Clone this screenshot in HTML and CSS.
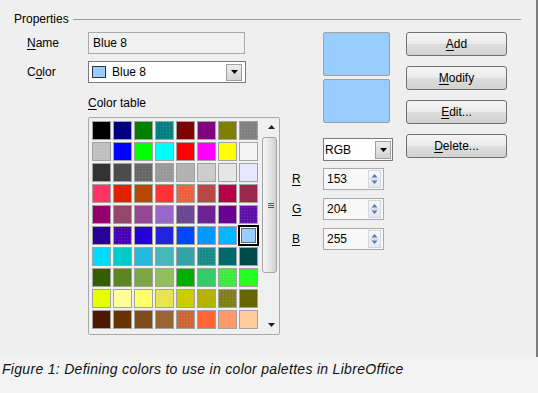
FILE: index.html
```html
<!DOCTYPE html>
<html lang="en">
<head>
    <meta charset="UTF-8">
    <title>Colors</title>
    <link rel="stylesheet" href="styles.css">
</head>
<body>
    <div class="dialog">
        <div class="legend"><span>Properties</span><div class="rule"></div></div>
        <div class="content">
            <div class="left">
                <div class="row">
                    <label><u>N</u>ame</label>
                    <div class="field name-field">Blue 8</div>
                </div>
                <div class="row">
                    <label>C<u>o</u>lor</label>
                    <div class="combo color-combo">
                        <span class="swatch"></span>
                        <span>Blue 8</span>
                        <span class="drop"><svg width="7" height="4" viewBox="0 0 7 4"><path d="M0 0h7L3.5 4z" fill="#000"/></svg></span>
                    </div>
                </div>
                <div class="table-label"><u>C</u>olor table</div>
                <div class="table-frame">
                    <div class="cells" id="cells"></div>
                    <div class="scrollbar">
                        <div class="arrow"><svg width="7" height="4" viewBox="0 0 7 4"><path d="M3.5 0L7 4H0z" fill="#222"/></svg></div>
                        <div class="thumb"><span class="grip"></span></div>
                        <div class="arrow down"><svg width="7" height="4" viewBox="0 0 7 4"><path d="M0 0h7L3.5 4z" fill="#222"/></svg></div>
                    </div>
                </div>
            </div>
            <div class="middle">
                <div class="preview"></div>
                <div class="preview"></div>
                <div class="combo rgb-combo">
                    <span>RGB</span>
                    <span class="drop"><svg width="7" height="4" viewBox="0 0 7 4"><path d="M0 0h7L3.5 4z" fill="#000"/></svg></span>
                </div>
                <div class="spin-row">
                    <label><u>R</u></label>
                    <div class="spin"><span>153</span><span class="spin-btns"><svg width="11" height="16" viewBox="0 0 11 16"><path d="M5.5 3L8.5 6.5H2.5z M2.5 9.5h6L5.5 13z" fill="#5a78b8"/><path d="M1 8h9" stroke="#c8cfdc"/></svg></span></div>
                </div>
                <div class="spin-row">
                    <label><u>G</u></label>
                    <div class="spin"><span>204</span><span class="spin-btns"><svg width="11" height="16" viewBox="0 0 11 16"><path d="M5.5 3L8.5 6.5H2.5z M2.5 9.5h6L5.5 13z" fill="#5a78b8"/><path d="M1 8h9" stroke="#c8cfdc"/></svg></span></div>
                </div>
                <div class="spin-row">
                    <label><u>B</u></label>
                    <div class="spin"><span>255</span><span class="spin-btns"><svg width="11" height="16" viewBox="0 0 11 16"><path d="M5.5 3L8.5 6.5H2.5z M2.5 9.5h6L5.5 13z" fill="#5a78b8"/><path d="M1 8h9" stroke="#c8cfdc"/></svg></span></div>
                </div>
            </div>
            <div class="buttons">
                <button><u>A</u>dd</button>
                <button><u>M</u>odify</button>
                <button><u>E</u>dit...</button>
                <button><u>D</u>elete...</button>
            </div>
        </div>
    </div>
    <p class="caption">Figure 1: Defining colors to use in color palettes in LibreOffice</p>
    <script>
        // standard palette, * = drawn dithered
        var palette = [
            '#000000', '#000080', '#008000', '*#008080', '#800000', '#800080', '#808000', '*#808080',
            '*#c0c0c0', '#0000ff', '#00ff00', '#00ffff', '#ff0000', '#ff00ff', '#ffff00', '#f4f4f4',
            '#333333', '#4c4c4c', '*#666666', '*#999999', '#b3b3b3', '*#cccccc', '*#e6e6e6', '#e6e6ff',
            '#ff3366', '#dc2300', '#b84700', '#ff3333', '*#eb613d', '#b84747', '#b80047', '#99284c',
            '#94006b', '#94476b', '#944794', '#9966cc', '#6b4794', '#6b2394', '#6b0094', '*#5e11a6',
            '#280099', '*#4700b8', '#2300dc', '#2323dc', '#0047ff', '#0099ff', '#00b8ff', '#99ccff',
            '#00dcff', '#00cccc', '#23b8dc', '#47b8b8', '#33a3a3', '*#198a8a', '#006b6b', '#004a4a',
            '#355e00', '#5c8526', '#7da647', '#94bd5e', '#00ae00', '#33cc66', '*#3deb3d', '#23ff23',
            '*#e6ff00', '#ffff99', '#ffff66', '#e6e64c', '#cccc00', '#b3b300', '*#808019', '#666600',
            '#4c1900', '#663300', '#804c19', '#996633', '*#cc6633', '#ff6633', '#ff9966', '#ffcc99'
        ];
        var cells = document.getElementById('cells');
        palette.forEach(function (c, i) {
            var cell = document.createElement('div');
            cell.className = 'cell';
            if (c.charAt(0) === '*') {
                c = c.slice(1);
                cell.className += ' dith';
            }
            if (i === 47) cell.className += ' selected';
            cell.style.backgroundColor = c;
            cells.appendChild(cell);
        });
    </script>
</body>
</html>
```

FILE: styles.css
```css
body {
    margin: 0;
    background: #f3f3f3;
    font-family: "Liberation Sans", Arial, sans-serif;
    font-size: 12px;
    line-height: 14px;
    color: #000;
}
u {
    text-decoration-thickness: 1px;
    text-underline-offset: 2px;
}
.dialog {
    height: 357px;
    box-sizing: border-box;
    background: #efefef;
    border-right: 2px solid #7d7d7d;
}
.legend {
    display: flex;
    align-items: center;
    gap: 4px;
    padding: 12px 15px 0 14px;
}
.legend .rule {
    flex: 1;
    height: 1px;
    background: #a0a0a0;
}
.content {
    display: flex;
    gap: 13px;
    margin-top: 6px;
    padding-left: 27px;
}
.left {
    width: 252px;
}
.row {
    display: flex;
    align-items: center;
    height: 22px;
}
.row + .row {
    margin-top: 7px;
}
.row label {
    width: 61px;
}
.field {
    box-sizing: border-box;
    height: 22px;
    display: flex;
    align-items: center;
    border: 1px solid #a9a9a9;
}
.name-field {
    width: 157px;
    padding-left: 4px;
    background: #f1f1f1;
}
.combo {
    box-sizing: border-box;
    display: flex;
    align-items: center;
    background: #fff;
    border: 1px solid #7a7a7a;
}
.color-combo {
    width: 158px;
    height: 22px;
    padding: 0 3px 0 3px;
}
.swatch {
    width: 14px;
    height: 12px;
    box-sizing: border-box;
    border: 1px solid #333;
    background: #99ccff;
    margin-right: 6px;
}
.drop {
    margin-left: auto;
    width: 16px;
    height: 17px;
    box-sizing: border-box;
    display: flex;
    align-items: center;
    justify-content: center;
    border: 1px solid #a0a0a0;
    background: linear-gradient(#eeeeee, #d4d4d4);
}
.table-label {
    margin: 13px 0 0 61px;
}
.table-frame {
    margin: 7px 0 0 61px;
    width: 192px;
    height: 218px;
    box-sizing: border-box;
    display: flex;
    gap: 3px;
    padding: 3px 1px 0 3px;
    border: 1px solid #a9a9a9;
    border-radius: 2px;
    background: #f0f0f0;
}
.cells {
    display: grid;
    grid-template-columns: repeat(8, 19px);
    grid-auto-rows: 19px;
    gap: 2px;
    align-content: start;
}
.cell {
    box-sizing: border-box;
    border: 1px solid #a2a2a2;
}
.cell.dith {
    background-image: radial-gradient(circle, rgba(255, 255, 255, 0.14) 0.6px, transparent 1px);
    background-size: 3px 3px;
}
.cell.selected {
    margin: -1px;
    width: 21px;
    height: 21px;
    border: 2px solid #000;
    box-shadow: inset 0 0 0 1px #fff, inset 0 0 0 2px #666;
}
.scrollbar {
    flex: 1;
    display: flex;
    flex-direction: column;
    align-items: center;
}
.arrow {
    height: 12px;
    display: flex;
    align-items: center;
    justify-content: center;
    padding-left: 4px;
}
.arrow.down {
    margin-top: auto;
    margin-bottom: 3px;
}
.thumb {
    margin-top: 4px;
    width: 15px;
    height: 136px;
    box-sizing: border-box;
    display: flex;
    align-items: center;
    justify-content: center;
    border: 1px solid #a3a3a3;
    border-radius: 3px;
    background: linear-gradient(90deg, #f6f6f6, #e2e2e2 60%, #cfcfcf);
}
.grip {
    width: 6px;
    height: 5px;
    margin-left: 2px;
    background: repeating-linear-gradient(#555 0 1px, transparent 1px 2px);
}
.middle {
    width: 101px;
    display: flex;
    flex-direction: column;
}
.preview {
    margin-left: 31px;
    width: 67px;
    height: 44px;
    box-sizing: border-box;
    border: 1px solid #a0a0a0;
    border-radius: 2px;
    background: #99ccff;
}
.preview + .preview {
    margin-top: 3px;
}
.rgb-combo {
    margin: 15px 0 0 31px;
    width: 70px;
    height: 23px;
    padding: 0 1px 0 1px;
}
.rgb-combo .drop {
    height: 18px;
}
.spin-row {
    display: flex;
    align-items: center;
    margin-top: 8px;
}
.rgb-combo + .spin-row {
    margin-top: 7px;
}
.spin-row label {
    width: 31px;
}
.spin {
    width: 61px;
    height: 22px;
    box-sizing: border-box;
    display: flex;
    align-items: center;
    padding: 0 2px 0 3px;
    border: 1px solid #a9a9a9;
    background: #f8f8f8;
}
.spin-btns {
    margin-left: auto;
    display: flex;
    border: 1px solid #d2d6de;
    background: linear-gradient(#f7f8fa, #e6e9ef);
}
.buttons {
    display: flex;
    flex-direction: column;
    gap: 10px;
}
button {
    width: 101px;
    height: 24px;
    padding: 0;
    font: inherit;
    color: #000;
    border: 1px solid #707070;
    border-radius: 3px;
    background: linear-gradient(#f4f4f4, #ebebeb 48%, #dedede 52%, #d2d2d2);
}
.caption {
    margin: 0;
    padding: 4px 0 0 2px;
    font-style: italic;
    font-size: 14px;
    line-height: 16px;
    letter-spacing: 0.3px;
    color: #111;
}
```
